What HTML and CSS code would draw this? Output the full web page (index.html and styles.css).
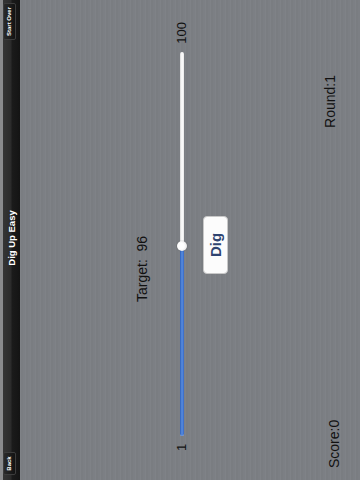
FILE: index.html
```html
<!DOCTYPE html>
<html>
<head>
<meta charset="utf-8">
<link rel="stylesheet" href="styles.css">
</head>
<body>
<div class="screen">
<div class="stage">
  <div class="statusline"></div>
  <header class="navbar">
    <div class="nav-left"><button class="nav-btn back">Back</button></div>
    <div class="title">Dig Up Easy</div>
    <div class="nav-right"><button class="nav-btn over">Start Over</button></div>
  </header>
  <main class="main">
    <div class="target">Target:&nbsp; 96</div>
    <div class="slider-row">
      <span class="tick">1</span>
      <div class="track">
        <div class="fill" style="width: 190px"></div>
        <div class="thumb" style="left: 190px"></div>
      </div>
      <span class="tick">100</span>
    </div>
    <div class="dig-row">
      <button class="dig">Dig</button>
    </div>
    <div class="stats">
      <span class="score">Score:0</span>
      <span class="round">Round:1</span>
    </div>
  </main>
</div>
</div>
</body>
</html>
```

FILE: styles.css
```css
html, body {
  margin: 0;
  padding: 0;
  overflow: hidden;
  width: 360px;
  height: 480px;
  background: #7d8085;
}

.screen {
  width: 360px;
  height: 480px;
  overflow: hidden;
}

.stage {
  width: 480px;
  height: 360px;
  transform-origin: 0 0;
  transform: translateY(480px) rotate(-90deg);
  display: flex;
  flex-direction: column;
  font-family: "Liberation Sans", Arial, sans-serif;
  background-color: #7c7f84;
  background-image: repeating-linear-gradient(180deg, rgba(255,255,255,0.025) 0 1px, rgba(0,0,0,0.02) 1px 3px, rgba(255,255,255,0) 3px 5px);
}

.statusline {
  height: 3px;
  background: #8a8b8d;
}

.navbar {
  height: 17px;
  background: linear-gradient(180deg, #353535 0%, #2b2b2b 48%, #1b1b1b 52%, #141414 100%);
  display: grid;
  grid-template-columns: 1fr auto 1fr;
  align-items: start;
  padding: 0 3px 0 5px;
}

.nav-right { justify-self: end; }

.nav-btn {
  display: block;
  height: 13px;
  margin: 0;
  padding: 0;
  border: 1px solid #3c3c3c;
  border-radius: 2px;
  background: linear-gradient(180deg, #2a2a2a, #121212);
  color: #fff;
  font-family: "Liberation Sans", Arial, sans-serif;
  font-weight: bold;
  font-size: 6px;
  line-height: 11px;
}

.nav-btn.back { width: 23px; }
.nav-btn.over { width: 37px; }

.title {
  color: #fff;
  font-weight: bold;
  font-size: 9.5px;
  line-height: 17px;
  height: 17px;
  margin-left: 2px;
}

.main {
  flex: 1;
  display: flex;
  flex-direction: column;
}

.target {
  margin: 114px 0 0 178px;
  font-size: 14px;
  line-height: 16px;
  height: 16px;
  color: #111;
}

.slider-row {
  margin-top: 22px;
  height: 20px;
  display: flex;
  align-items: center;
  padding-left: 29px;
  gap: 8px;
}

.tick {
  font-size: 13px;
  line-height: 16px;
  color: #111;
}

.track {
  position: relative;
  width: 384px;
  height: 4px;
  border-radius: 2px;
  background: linear-gradient(180deg, #d8d8d8, #ffffff 50%, #e8e8e8);
}

.fill {
  height: 4px;
  border-radius: 2px 0 0 2px;
  background: linear-gradient(180deg, #2d5fb8, #5a8ee0 50%, #3567c4);
}

.thumb {
  position: absolute;
  top: -3px;
  width: 10px;
  height: 10px;
  margin-left: -5px;
  border-radius: 50%;
  background: radial-gradient(circle at 50% 40%, #ffffff 40%, #d9d9d9 100%);
  box-shadow: 0 0 1px rgba(0,0,0,0.5);
}

.dig-row {
  margin-top: 11px;
  padding-left: 206px;
}

.dig {
  width: 58px;
  height: 25px;
  margin: 0;
  padding: 0;
  border: 1px solid #c8c8c8;
  border-radius: 4px;
  background: #fcfcfc;
  color: #2f4470;
  font-family: "Liberation Sans", Arial, sans-serif;
  font-weight: bold;
  font-size: 15px;
  line-height: 23px;
}

.stats {
  margin-top: 94px;
  display: flex;
  align-items: flex-start;
  justify-content: space-between;
  padding: 0 75px 0 12px;
  font-size: 14px;
  line-height: 16px;
  color: #111;
}

.score { padding-top: 4px; }
```
